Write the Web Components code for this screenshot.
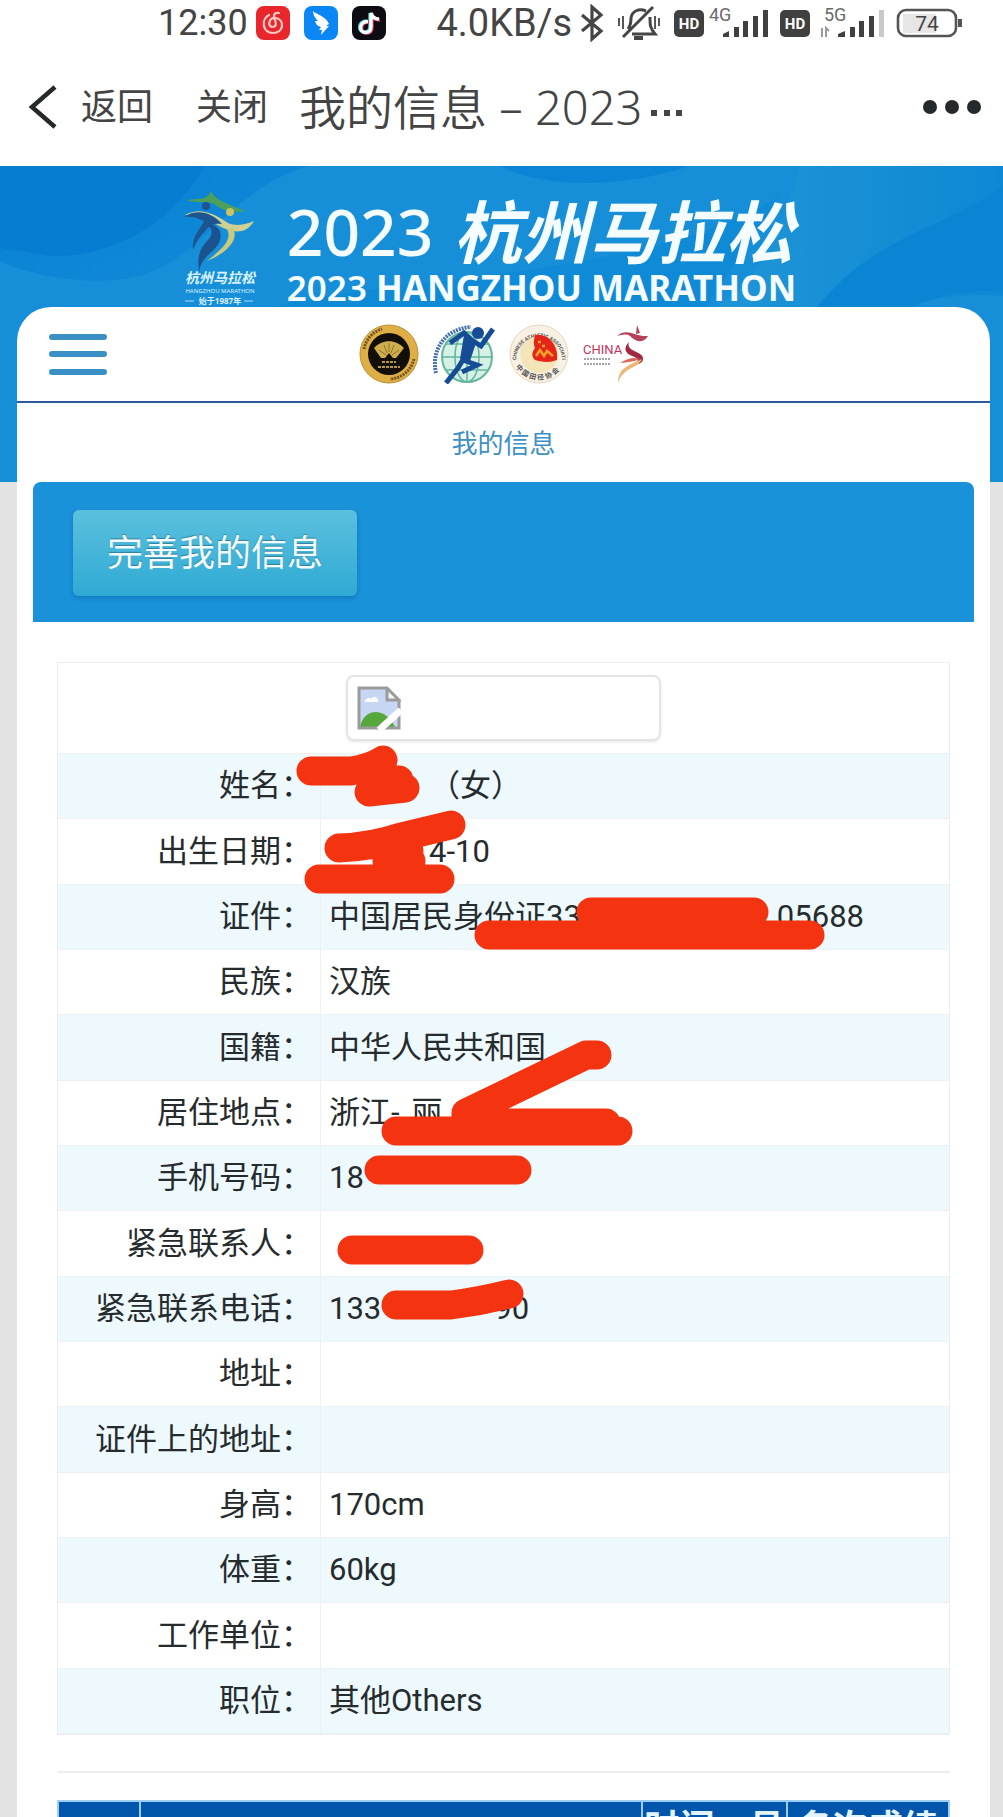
<!DOCTYPE html>
<html lang="zh-CN">
<head>
<meta charset="utf-8">
<meta name="viewport" content="width=device-width, initial-scale=1">
<title>我的信息 - 2023杭州马拉松</title>
<style>
  body {
    margin: 0;
    background: #e3e3e3;
    font-family: Roboto, "Noto Sans CJK SC", sans-serif;
    color: #262b2e;
  }
</style>
</head>
<body>
<app-screen>
  <status-bar time="12:30" speed="4.0KB/s" battery="74"></status-bar>
  <nav-bar>我的信息 – 2023</nav-bar>
  <race-hero>
    <site-header></site-header>
    <span slot="crumb">我的信息</span>
  </race-hero>
  <page-card>
    <action-panel>完善我的信息</action-panel>
    <info-table></info-table>
    <result-table></result-table>
  </page-card>
</app-screen>

<script>
/* Attach an open shadow root and fill it from markup */
function mount(el, html) {
  const template = document.createElement('template');
  template.innerHTML = html;
  el.attachShadow({ mode: 'open' }).appendChild(template.content.cloneNode(true));
}

class AppScreen extends HTMLElement {
  constructor() {
    super();
    mount(this, `
      <style>
        :host {
          display: flex;
          flex-direction: column;
          height: 100vh;
          overflow-y: auto;
          scrollbar-width: none;
        }
        ::slotted(*) { flex-shrink: 0; }
      </style>
      <slot></slot>
    `);
  }
}

class StatusBar extends HTMLElement {
  constructor() {
    super();
    mount(this, `
      <style>
        :host {
          display: flex;
          align-items: center;
          justify-content: space-between;
          height: 46px;
          padding: 0 40px 0 158px;
          background: #fff;
          color: #454545;
          font-size: 36px;
          line-height: 46px;
        }
        svg { display: block; }
        .left, .right { display: flex; align-items: center; }
        .apps { display: flex; gap: 14px; margin-left: 8px; }
        .right { gap: 8px; }
        .speed { font-size: 38px; }
        .cell { display: flex; gap: 4px; }
      </style>
      <div class="left">
        <span class="time"></span>
        <div class="apps">
          <svg width="34" height="34" viewBox="0 0 34 34">
            <rect width="34" height="34" rx="8" fill="#e9262c"/>
            <g fill="none" stroke="#ffc9c6" stroke-width="2.2" stroke-linecap="round">
              <path d="M13 9C5 13 6 27 17 27c11 0 12-13 3-15-7-1-9 8-4 9 5 0 4-4 3-7-2-5-1-8 4-7"/>
            </g>
          </svg>
          <svg width="34" height="34" viewBox="0 0 34 34">
            <rect width="34" height="34" rx="8" fill="#0a86f5"/>
            <path d="M9 5c4 4 13 5 16 13l-3 2h3l-8 9 1-5h-3l2-3c-4-1-5-3-6-6l3 0c-3-3-5-6-5-10z" fill="#fff"/>
          </svg>
          <svg width="34" height="34" viewBox="0 0 34 34">
            <rect width="34" height="34" rx="8" fill="#0c0c12"/>
            <g fill="none" stroke-width="3.4">
              <path d="M15 15c-10 0-9 12-2 11 4 0 5-3 5-6V7c1 4 4 6 8 6" stroke="#35d6d8"/>
              <path d="M17 16c-10 0-9 12-2 11 4 0 5-3 5-6V8c1 4 4 6 8 6" stroke="#e2305c"/>
              <path d="M16 15.500c-10 0-9 12-2 11 4 0 5-3 5-6V7c1 4 4 6 8 6" stroke="#fff"/>
            </g>
          </svg>
        </div>
      </div>
      <div class="right">
        <span class="speed"></span>
        <svg width="24" height="38" viewBox="0 0 24 38" fill="none" stroke="#454545" stroke-width="3.200">
          <path d="M2 11l19 16-9 8V3l9 8L2 27"/>
        </svg>
        <svg width="54" height="38" viewBox="-5 0 54 38" fill="none" stroke="#454545" stroke-width="3">
          <path d="M36 3L6 33M11 25c3-4 3-7 3-11 1-7 8-10 15-7M33 13c0 8 0 11 5 17H15"/>
          <path d="M17 34h9" stroke-width="4"/>
          <path d="M2 14v8M6 12v13M38 12v13M42 14v8" stroke-width="1.800"/>
        </svg>
        <div class="cell">
          <svg width="30" height="38" viewBox="0 0 30 38">
            <rect y="6" width="30" height="27" rx="5" fill="#404040"/>
            <text x="15" y="25" text-anchor="middle" font-size="15" font-weight="700" fill="#fff">HD</text>
          </svg>
          <svg width="64" height="38" viewBox="0 0 64 38" fill="#404040">
            <text x="1" y="17" font-size="18" fill="#6a6a6a">4G</text>
            <path d="M15 33v-3l6-3v6zM26 23h5v10h-5zM35 17h5v16h-5zM45 12h5v21h-5zM55 6h5v27h-5z"/>
          </svg>
        </div>
        <div class="cell">
          <svg width="30" height="38" viewBox="0 0 30 38">
            <rect y="6" width="30" height="27" rx="5" fill="#404040"/>
            <text x="15" y="25" text-anchor="middle" font-size="15" font-weight="700" fill="#fff">HD</text>
          </svg>
          <svg width="74" height="38" viewBox="0 0 74 38" fill="#404040">
            <text x="10" y="17" font-size="18" fill="#6a6a6a">5G</text>
            <path d="M8 33v-9M12 33v-9l3 3" fill="none" stroke="#9a9a9a" stroke-width="2"/>
            <path d="M24 33v-3l7-3v6zM36 23h5v10h-5zM45 17h5v16h-5zM55 12h5v21h-5z"/>
            <path d="M65 6h5v27h-5z" fill="#c9c9c9"/>
          </svg>
        </div>
        <svg width="67" height="38" viewBox="0 0 67 38">
          <rect x="7" y="10" width="33" height="19" fill="#e6e6e6"/>
          <rect x="2" y="6" width="58" height="26" rx="8" fill="none" stroke="#555" stroke-width="2.600"/>
          <path d="M64 15v8" stroke="#555" stroke-width="4"/>
          <text class="battery" x="31" y="27" text-anchor="middle" font-size="21" fill="#444"></text>
        </svg>
      </div>
    `);
  }

  connectedCallback() {
    for (const key of ['time', 'speed', 'battery']) {
      this.shadowRoot.querySelector('.' + key).textContent = this.getAttribute(key);
    }
  }
}

class NavBar extends HTMLElement {
  constructor() {
    super();
    mount(this, `
      <style>
        :host {
          display: flex;
          align-items: center;
          height: 120px;
          padding: 2px 20px 0 26px;
          background: #fff;
          color: #444;
          font-family: "Noto Sans", "Noto Sans CJK SC", sans-serif;
          box-sizing: border-box;
        }
        button {
          display: flex;
          align-items: center;
          padding: 0;
          border: 0;
          background: none;
          color: inherit;
          font: inherit;
          font-size: 36px;
          line-height: 52px;
          cursor: pointer;
        }
        .back { gap: 22px; margin-right: 43px; }
        h1 {
          flex: 1;
          margin: 0 0 0 31px;
          font-size: 47px;
          font-weight: 350;
          line-height: 56px;
          white-space: nowrap;
        }
        .more { display: inline-block; vertical-align: middle; margin-left: 8px; }
      </style>
      <button class="back" type="button">
        <svg width="33" height="46" viewBox="0 0 33 46" fill="none" stroke="#26292b" stroke-width="4.500">
          <path d="M29 3L6 23l23 20"/>
        </svg>
        返回
      </button>
      <button type="button">关闭</button>
      <h1><slot></slot><svg class="more" width="34" height="8" viewBox="0 0 34 8" fill="#444"><path d="M1 1h6v6H1zM14 1h6v6h-6zM26 1h6v6h-6z"/></svg></h1>
      <button type="button" aria-label="更多">
        <svg width="62" height="20" viewBox="0 0 62 20" fill="#26292b">
          <circle cx="9" cy="10" r="7"/><circle cx="31" cy="10" r="7"/><circle cx="53" cy="10" r="7"/>
        </svg>
      </button>
    `);
  }
}

class RaceLogo extends HTMLElement {
  constructor() {
    super();
    mount(this, `
      <style>:host, svg { display: block; }</style>
      <svg width="74" height="120" viewBox="0 0 74 120">
        <path d="M4 12c12-2 20 1 24-9 3 8 14 12 34 20-12 2-20 1-31-7-9-4-17 0-27-4z" fill="#4d9f5a"/>
        <path d="M2 27c15-8 28-2 43 8 10 4 18 1 26-2-6 11-16 12-26 9-14-6-25-15-43-15z" fill="#cfd092"/>
        <path d="M44 41c5 10-2 18-20 32 22-9 32-22 26-33z" fill="#c8cb7c"/>
        <path d="M1 29c14-9 28-4 38 7-7-1-10 0-14 4-9 9-12 14-15 22-1-15 7-20 11-29-8-4-13-5-20-4z" fill="#1d5590"/>
        <path d="M25 36c12 2 15 8 11 19-6 11-17 12-20 29-2-17 1-23 8-31 6-6 6-10 1-17z" fill="#1b5290"/>
        <circle cx="23" cy="18" r="4" fill="#1d5590"/>
        <circle cx="47" cy="24" r="4" fill="#c9c266"/>
        <g fill="#d8f2ff" text-anchor="middle">
          <text x="37" y="95" font-size="14" font-style="italic" font-weight="700">杭州马拉松</text>
          <text x="37" y="105" font-size="6">HANGZHOU MARATHON</text>
          <text x="37" y="116" font-size="8" font-weight="700">始于1987年</text>
        </g>
        <path d="M2 113h9M61 113h9" stroke="#a9d9f5"/>
      </svg>
    `);
  }
}

class RaceHero extends HTMLElement {
  constructor() {
    super();
    mount(this, `
      <style>
        :host {
          display: block;
          position: relative;
          background: #178fd8;
        }
        .art {
          position: absolute;
          inset: 0;
          width: 100%;
          height: 100%;
        }
        .banner, .card { position: relative; }
        .banner {
          display: flex;
          justify-content: center;
          gap: 30px;
          height: 141px;
          padding-right: 24px;
          color: #f4fcff;
          font-family: "Noto Sans", "Noto Sans CJK SC", sans-serif;
        }
        race-logo { margin-top: 22px; }
        h2, p { margin: 0; white-space: nowrap; }
        h2 {
          display: flex;
          gap: 20px;
          margin-top: 27px;
          font-size: 64px;
          font-weight: 500;
          line-height: 78px;
        }
        em { font-size: 68px; font-weight: 700; }
        p { font-size: 35px; font-weight: 700; line-height: 34px; }
        .year { font-weight: 600; }
        .card {
          margin: 0 13px 0 17px;
          border-radius: 34px 34px 0 0;
          background: #fff;
        }
        .crumb {
          padding-top: 4px;
          color: #3d8fc4;
          font-size: 26px;
          line-height: 75px;
          text-align: center;
        }
      </style>
      <svg class="art" viewBox="0 0 1003 316" preserveAspectRatio="none">
        <defs>
          <linearGradient id="deep" x1="0" y1="0" x2="1" y2="1">
            <stop offset="0" stop-color="#0880d4"/>
            <stop offset="1" stop-color="#128bd7"/>
          </linearGradient>
          <linearGradient id="fold" x1="0" y1="0" x2="1" y2="0">
            <stop offset="0" stop-color="#2196d6"/>
            <stop offset="1" stop-color="#0e88d5"/>
          </linearGradient>
        </defs>
        <path d="M0 0h310C230 20 200 100 130 112 90 120 30 110 0 95z" fill="url(#deep)"/>
        <path d="M0 0h205C170 60 110 92 50 90L0 82z" fill="#067dd1"/>
        <path d="M250 150C330 110 640 120 780 30L700 150z" fill="#0f8ad6"/>
        <path d="M500 0h190c-60 20-140 25-190 0z" fill="#0a84d5"/>
        <path d="M700 150c60-30 80-80 100-150h203v130c-60-5-90 10-120 20z" fill="url(#fold)"/>
        <path d="M810 150C870 70 930 70 1003 20v105c-50-2-80 10-110 25z" fill="#0a85d4"/>
      </svg>
      <div class="banner">
        <race-logo></race-logo>
        <div>
          <h2>2023 <em>杭州马拉松</em></h2>
          <p><span class="year">2023</span> HANGZHOU MARATHON</p>
        </div>
      </div>
      <div class="card">
        <slot></slot>
        <div class="crumb"><slot name="crumb"></slot></div>
      </div>
    `);
  }
}

class SiteHeader extends HTMLElement {
  constructor() {
    super();
    mount(this, `
      <style>
        :host {
          display: grid;
          grid-template-columns: 1fr auto 1fr;
          align-items: center;
          height: 94px;
          border-bottom: 2px solid #2c5a9c;
        }
        button {
          justify-self: start;
          margin-left: 32px;
          padding: 0;
          border: 0;
          background: none;
          cursor: pointer;
        }
        svg { display: block; }
        .badges { display: flex; gap: 14px; }
      </style>
      <button type="button" aria-label="菜单">
        <svg width="58" height="44" viewBox="0 0 58 44" stroke="#3a90c4" stroke-width="6" stroke-linecap="round">
          <path d="M3 5h52M3 22h52M3 40h52"/>
        </svg>
      </button>
      <div class="badges">
        <svg width="60" height="60" viewBox="0 0 60 60">
          <circle cx="30" cy="30" r="29" fill="#dfae45" stroke="#b98f35"/>
          <path d="M5 25A26 26 0 0 1 23 5M55 35a26 26 0 0 1-24 20" fill="none" stroke="#6d5420" stroke-width="3" stroke-dasharray="2 1"/>
          <circle cx="30" cy="30" r="21" fill="#120e08"/>
          <path d="M15 24c8-9 22-9 30 0l-8 10h-3l-4-5-4 5h-4z" fill="#d1ae4d"/>
          <path d="M20 26l7 5M25 21l3 8M30 19v9M35 21l-3 8M40 26l-7 5" stroke="#8d722c"/>
          <path d="M23 38h14M19 43h22" stroke="#b5974a" stroke-width="2" stroke-dasharray="3 1"/>
        </svg>
        <svg width="62" height="60" viewBox="0 0 62 60">
          <circle cx="34" cy="33" r="25" fill="#d5f1e6" stroke="#64b59b" stroke-width="2"/>
          <g fill="none" stroke="#62b5a0" stroke-width="1.500">
            <ellipse cx="34" cy="33" rx="12" ry="25"/>
            <path d="M34 8v50M9 33h50M13 20h42M13 46h42"/>
          </g>
          <path d="M3 49C-2 28 10 5 38 3" fill="none" stroke="#416fae" stroke-width="4" stroke-dasharray="2 1"/>
          <circle cx="45" cy="9" r="6" fill="#164c96"/>
          <path d="M17 19l14-10 9 8 8 5L60 5M37 16l-7 20 14 5-15 7M31 34l-6 10-12 15" fill="none" stroke="#164c96" stroke-width="5"/>
          <path d="M31 11l12 8-6 18-10-2z" fill="#164c96"/>
        </svg>
        <svg width="60" height="60" viewBox="0 0 60 60">
          <defs>
            <path id="over" d="M7 36a23 23 0 1 1 46 0"/>
            <path id="under" d="M5 39a27 27 0 0 0 50 0"/>
          </defs>
          <circle cx="30" cy="30" r="29" fill="#f8f1e3" stroke="#e5d6bd"/>
          <circle cx="30" cy="30" r="19" fill="#f4e5b9"/>
          <text font-size="5" font-weight="700" fill="#555"><textPath href="#over">CHINESE ATHLETIC ASSOCIATION</textPath></text>
          <text font-size="7" font-weight="700" fill="#555"><textPath href="#under" startOffset="4">中 国 田 径 协 会</textPath></text>
          <path d="M26 11c13-2 24 10 22 25-7 3-16 2-22 0-4-4-3-8 0-12-2-5-1-8 0-13z" fill="#e52518"/>
          <path d="M27 32l4-6 4 6 3-5 6 5M29 18h3M33 22h3" fill="none" stroke="#f7a52a" stroke-width="2.500"/>
        </svg>
        <svg width="66" height="60" viewBox="0 0 66 60">
          <text x="0" y="30" font-size="13" fill="#c9315a">CHINA</text>
          <path d="M1 35h26M1 40h26" stroke="#a3a3a3" stroke-width="2" stroke-dasharray="2 1"/>
          <path d="M34 12c10-9 18 1 31 0-5 8-12 6-18 0-4-3-9-1-13 0zM54 1l3 8-4 1z" fill="#b8405a"/>
          <path d="M46 18c-4 10 15 9 14 17 0 3-3 5-8 6 5-5 3-7-3-9-7-3-9-8-3-14z" fill="#a02842"/>
          <path d="M59 35c-4 10-19 8-24 24 0-14 8-17 24-24z" fill="#ecb778"/>
          <path d="M37 39c8-5 14-6 20-4-6 3-12 3-20 4z" fill="#d9685c"/>
        </svg>
      </div>
    `);
  }
}

class PageCard extends HTMLElement {
  constructor() {
    super();
    mount(this, `
      <style>
        :host {
          display: block;
          margin: 0 13px 0 17px;
          background: #fff;
        }
      </style>
      <slot></slot>
    `);
  }
}

class ActionPanel extends HTMLElement {
  constructor() {
    super();
    mount(this, `
      <style>
        :host {
          display: block;
          margin: 0 16px;
          padding: 28px 40px 26px;
          border-radius: 8px 8px 0 0;
          background: #1a92da;
        }
        button {
          display: block;
          height: 86px;
          padding: 0 34px 6px;
          border: 0;
          border-radius: 6px;
          background: linear-gradient(#5bc0de, #2faad4);
          box-shadow: 0 2px 5px rgba(0, 60, 120, 0.3);
          color: #f2fcff;
          font: inherit;
          font-size: 36px;
          text-shadow: 0 -1px 1px rgba(0, 0, 0, 0.3);
          cursor: pointer;
        }
      </style>
      <button type="button"><slot></slot></button>
    `);
  }
}

/* Marker strokes, drawn from the left top corner of the cell they hide */
class InkMark extends HTMLElement {
  constructor() {
    super();
    mount(this, `
      <style>
        :host {
          position: absolute;
          z-index: 1;
          top: 0;
          left: 0;
          pointer-events: none;
        }
        svg { display: block; overflow: visible; }
      </style>
      <svg width="1" height="1" fill="none" stroke="#f43310" stroke-width="29" stroke-linecap="round" stroke-linejoin="round">
        <path/>
      </svg>
    `);
  }

  connectedCallback() {
    this.shadowRoot.querySelector('path').setAttribute('d', this.getAttribute('d'));
  }
}

/* Numbers in a value leave a blank of that many pixels */
const ROWS = [
  { label: '姓名', value: [100, '（女）'], ink: 'M-10 17H30Q50 14 62 6M48 38L84 34M50 34L62 26H78' },
  { label: '出生日期', value: [100, '4-10'], ink: 'M18 29Q50 28 80 18L130 6M66 42H90M64 32H88M-2 60H119' },
  { label: '证件', value: ['中国居民身份证33', 196, '05688'], ink: 'M270 27H433M168 50H489' },
  { label: '民族', value: ['汉族'] },
  { label: '国籍', value: ['中华人民共和国'] },
  { label: '居住地点', value: ['浙江-', 12, '丽'], ink: 'M276 -26H265L145 32V42H285M75 50H297' },
  { label: '手机号码', value: ['18'], ink: 'M58 24H196' },
  { label: '紧急联系人', value: [], ink: 'M31 39H148' },
  { label: '紧急联系电话', value: ['133', 113, '90'], ink: 'M75 28H130Q160 24 188 17' },
  { label: '地址', value: [] },
  { label: '证件上的地址', value: [] },
  { label: '身高', value: ['170cm'] },
  { label: '体重', value: ['60kg'] },
  { label: '工作单位', value: [] },
  { label: '职位', value: ['其他Others'] },
];

class InfoTable extends HTMLElement {
  constructor() {
    super();
    mount(this, `
      <style>
        :host { display: block; margin: 40px 40px 0; }
        table {
          width: 100%;
          border: 1px solid #ececec;
          border-spacing: 0;
          box-sizing: border-box;
          font-size: 31px;
          line-height: 40px;
        }
        th, td {
          position: relative;
          height: 65px;
          padding: 0 8px;
          border-bottom: 1px solid #eef0f2;
          box-sizing: border-box;
          font-weight: 400;
          text-align: left;
          white-space: nowrap;
        }
        tr:nth-child(3n) > * { height: 66px; }
        th {
          width: 263px;
          border-right: 1px solid #eef0f2;
          text-align: right;
        }
        tbody tr:nth-child(even) { background: #edf9fd; }
        .photo { height: 91px; }
        .frame {
          display: flex;
          align-items: center;
          width: 36%;
          height: 66px;
          margin: 0 auto;
          padding: 0 9px;
          border: 2px solid #e4e4e4;
          border-radius: 8px;
          box-sizing: border-box;
          box-shadow: 0 1px 3px rgba(0, 0, 0, 0.1);
        }
        .gap { display: inline-block; }
      </style>
      <table>
        <tbody>
          <tr>
            <td class="photo" colspan="2">
              <div class="frame">
                <svg width="44" height="44" viewBox="0 0 44 44" role="img" aria-label="照片">
                  <path d="M2 2h28l12 12v28H2z" fill="#c7d7f3"/>
                  <path d="M8 16c0-4 4-5 6-3 3-4 8-1 7 3z" fill="#fff"/>
                  <path d="M3 41c4-20 26-20 35 0z" fill="#57a83c"/>
                  <path d="M30 2v12h12z" fill="#f4f4f4"/>
                  <path d="M42 14v28H2V2h28l12 12H30V2" fill="none" stroke="#9b9b9b" stroke-width="3"/>
                  <path d="M22 44L44 24" stroke="#fff" stroke-width="7"/>
                </svg>
              </div>
            </td>
          </tr>
        </tbody>
      </table>
    `);
    const body = this.shadowRoot.querySelector('tbody');
    for (const row of ROWS) body.appendChild(this._row(row));
  }

  _row({ label, value, ink }) {
    const tr = document.createElement('tr');
    const th = document.createElement('th');
    const td = document.createElement('td');
    th.scope = 'row';
    th.textContent = label + '：';
    for (const part of value) {
      if (typeof part === 'string') {
        td.append(part);
        continue;
      }
      const gap = document.createElement('span');
      gap.className = 'gap';
      gap.style.width = part + 'px';
      td.append(gap);
    }
    if (ink) {
      const mark = document.createElement('ink-mark');
      mark.setAttribute('d', ink);
      td.append(mark);
    }
    tr.append(th, td);
    return tr;
  }
}

class ResultTable extends HTMLElement {
  constructor() {
    super();
    mount(this, `
      <style>
        :host {
          display: block;
          margin: 36px 40px 0;
          padding-top: 27px;
          border-top: 2px solid #efefef;
        }
        table {
          width: 100%;
          border-collapse: collapse;
          table-layout: fixed;
        }
        th {
          height: 54px;
          padding: 0;
          border: 2px solid #9ccdf2;
          background: #0156ab;
          color: #e2f5ff;
          font-size: 35px;
          font-weight: 700;
          line-height: 50px;
          white-space: nowrap;
        }
        .no { width: 9%; }
        .when { width: 16%; }
        .rank { width: 18%; }
      </style>
      <table>
        <thead>
          <tr>
            <th class="no" scope="col"></th>
            <th scope="col"></th>
            <th class="when" scope="col">时间　号</th>
            <th class="rank" scope="col">名次成绩</th>
          </tr>
        </thead>
      </table>
    `);
  }
}

customElements.define('ink-mark', InkMark);
customElements.define('race-logo', RaceLogo);
customElements.define('status-bar', StatusBar);
customElements.define('nav-bar', NavBar);
customElements.define('site-header', SiteHeader);
customElements.define('race-hero', RaceHero);
customElements.define('action-panel', ActionPanel);
customElements.define('info-table', InfoTable);
customElements.define('result-table', ResultTable);
customElements.define('page-card', PageCard);
customElements.define('app-screen', AppScreen);
</script>
</body>
</html>
